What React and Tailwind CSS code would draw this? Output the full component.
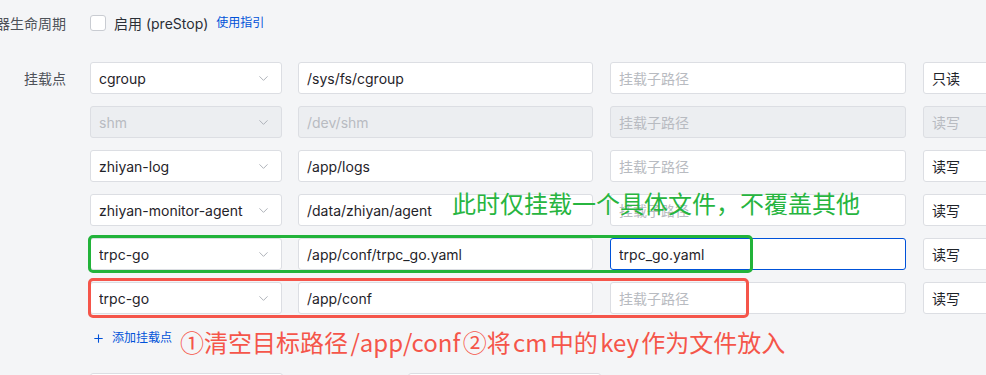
import { ChevronDown, Plus } from 'lucide-react';

const mounts = [
    { name: 'cgroup', path: '/sys/fs/cgroup', sub: '', mode: '只读' },
    { name: 'shm', path: '/dev/shm', sub: '', mode: '读写', disabled: true },
    { name: 'zhiyan-log', path: '/app/logs', sub: '', mode: '读写' },
    { name: 'zhiyan-monitor-agent', path: '/data/zhiyan/agent', sub: '', mode: '读写' },
    { name: 'trpc-go', path: '/app/conf/trpc_go.yaml', sub: 'trpc_go.yaml', mode: '读写', focused: true },
    { name: 'trpc-go', path: '/app/conf', sub: '', mode: '读写' },
];

function Field({ value, placeholder, disabled, focused, className, select }) {
    const box = disabled
        ? 'bg-[#eceef1] border-[#dcdee3] text-[#b8bbc1]'
        : focused
            ? 'bg-white border-[#0052d9] text-[#1f2329]'
            : 'bg-white border-[#dcdee3] text-[#1f2329]';
    return (
        <div className={`h-8 flex items-center border rounded-[3px] pl-[8px] pr-[10px] text-[14px] ${box} ${className}`}>
            <span className={`flex-1 truncate ${value ? '' : 'text-[#b8bbc1]'}`}>{value || placeholder}</span>
            {select && <ChevronDown size={15} strokeWidth={1.5} className="text-[#a9adb4]" />}
        </div>
    );
}

function MountRow({ row }) {
    return (
        <div className="flex items-center">
            <Field select value={row.name} disabled={row.disabled} className="w-[192px] shrink-0" />
            <Field value={row.path} disabled={row.disabled} className="w-[295px] ml-4 shrink-0" />
            <Field value={row.sub} placeholder="挂载子路径" disabled={row.disabled} focused={row.focused} className="w-[296px] ml-[17px] shrink-0" />
            <Field value={row.mode} disabled={row.disabled} className="w-[100px] ml-[17px] shrink-0" />
        </div>
    );
}

export default function App() {
    return (
        <div
            className="relative w-[986px] h-[375px] overflow-hidden bg-[#f4f5f7] text-[#1f2329]"
            style={{ fontFamily: 'Inter, "Noto Sans CJK SC", sans-serif' }}
        >
            <div className="flex items-center h-[46px]">
                <div className="w-[66px] shrink-0 text-right text-[14px] text-[#4e5259] whitespace-nowrap flex justify-end">
                    <span>容器生命周期</span>
                </div>
                <div className="ml-6 flex items-center">
                    <span className="w-4 h-4 rounded-[3px] border border-[#c9ccd2] bg-white" />
                    <span className="ml-2 text-[14px] text-[#2a2e36]">启用 (preStop)</span>
                    <span className="ml-2 text-[12px] text-[#0052d9]">使用指引</span>
                </div>
            </div>

            <div className="flex mt-4">
                <div className="w-[66px] shrink-0 h-8 flex items-center justify-end text-[14px] text-[#4e5259]">
                    挂载点
                </div>
                <div className="ml-6 flex flex-col gap-3">
                    {mounts.map((row, i) => (
                        <MountRow key={i} row={row} />
                    ))}
                    <div className="flex items-center h-[24px] pl-[2px] text-[#0052d9]">
                        <Plus size={13} strokeWidth={2} />
                        <span className="ml-[7px] text-[12px]">添加挂载点</span>
                    </div>
                </div>
            </div>

            <div className="flex mt-[23px] ml-[90px]">
                <div className="w-[193px] h-8 rounded-[3px] border border-[#dcdee3] bg-white" />
                <div className="w-[193px] h-8 ml-[125px] rounded-[3px] border border-[#dcdee3] bg-white" />
            </div>

            {/* annotations */}
            <div className="absolute left-[88px] top-[235px] w-[665px] h-[38px] rounded-[5px] border-[3px] border-[#22b33a]" />
            <div className="absolute left-[88px] top-[278px] w-[661px] h-[40px] rounded-[5px] border-[3px] border-[#f5554a]" />
            <div className="absolute left-[452px] top-[191px] text-[24px] leading-[28px] text-[#27b53f] whitespace-nowrap">
                此时仅挂载一个具体文件，不覆盖其他
            </div>
            <div
                className="absolute left-[180px] top-[328px] text-[24px] leading-[28px] text-[#f5554a] whitespace-nowrap [word-spacing:-3px]"
                style={{ fontFamily: '"Noto Sans CJK SC", sans-serif' }}
            >
                ①清空目标路径 /app/conf ②将 cm 中的 key 作为文件放入
            </div>
        </div>
    );
}
